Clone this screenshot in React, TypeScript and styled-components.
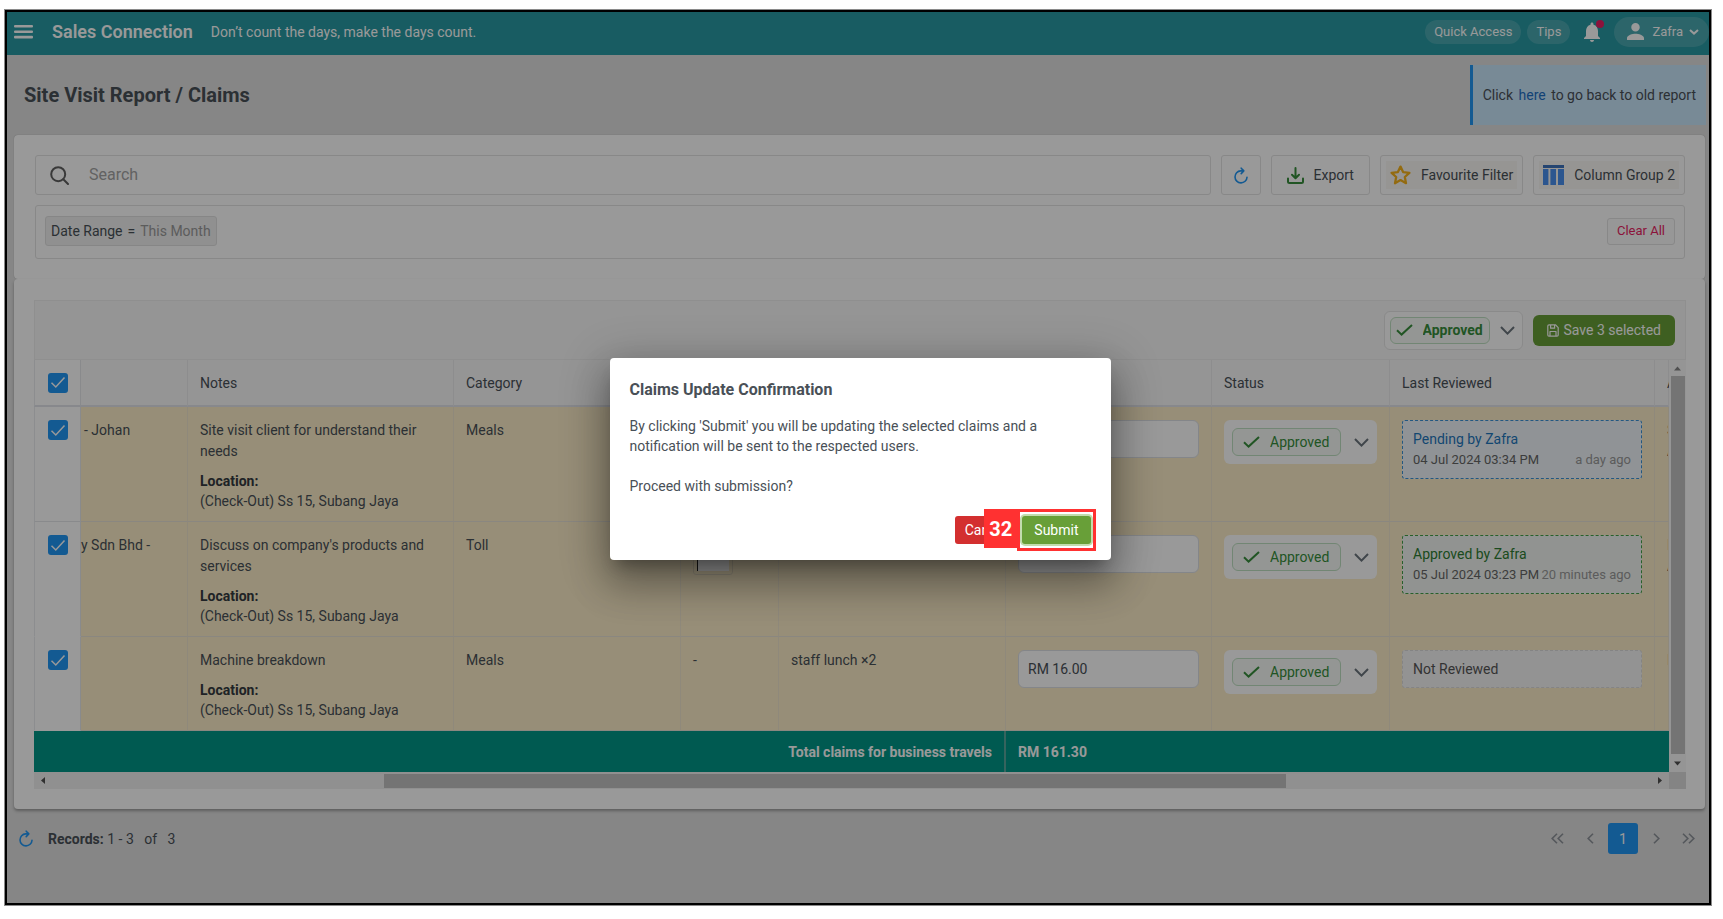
import React from "react";
import styled, { createGlobalStyle, css } from "styled-components";

const Global = createGlobalStyle`
  *, *::before, *::after { box-sizing: border-box; }
  body { margin: 0; background: #fff; font-family: Roboto, "Liberation Sans", sans-serif; font-size: 14px; line-height: 20px; color: #495057; }
  button, input, select { font: inherit; color: inherit; margin: 0; }
  button { cursor: pointer; }
  svg { display: block; flex: none; }
`;

const Page = styled.div`
  display: flex;
  min-height: 100vh;
  padding: 10px 12px 14px 5px;
`;

const Frame = styled.div`
  position: relative;
  display: flex;
  flex: 1;
  flex-direction: column;
  min-width: 0;
  overflow: hidden;
  border: 2px solid #000;
  outline: 1px solid #8a8a8a;
  background: #dfdfdf;
`;

/* ---------- top bar ---------- */

const TopBar = styled.header`
  display: flex;
  align-items: center;
  height: 43px;
  padding: 0 0 4px 7px;
  background: #2899a3;
  color: #fff;
`;

const MenuButton = styled.button`
  display: flex;
  padding: 0;
  border: 0;
  background: none;
`;

const Brand = styled.span`
  margin-left: 19px;
  font-size: 18px;
  font-weight: 600;
`;

const Motto = styled.span`
  flex: 1;
  margin-left: 18px;
`;

const TopActions = styled.nav`
  display: flex;
  align-items: center;
`;

const Pill = styled.button`
  height: 24px;
  margin-right: 6px;
  padding: 0 9px;
  border: 0;
  border-radius: 12px;
  background: rgba(255, 255, 255, 0.16);
  font-size: 13px;
  line-height: 16px;
`;

const BellButton = styled.button`
  position: relative;
  display: flex;
  margin: 0 14px 0 8px;
  padding: 0;
  border: 0;
  background: none;
`;

const AlertDot = styled.span`
  position: absolute;
  top: -2px;
  right: -4px;
  width: 8px;
  height: 8px;
  border-radius: 50%;
  background: #e91e63;
`;

const UserButton = styled.button`
  display: flex;
  align-items: center;
  height: 30px;
  padding: 0 10px 0 13px;
  border: 0;
  border-radius: 15px;
  background: rgba(255, 255, 255, 0.16);
  font-size: 13px;
`;

const UserName = styled.span`
  margin: 0 6px 0 8px;
`;

/* ---------- heading ---------- */

const Heading = styled.div`
  display: flex;
  align-items: center;
  justify-content: space-between;
  padding: 10px 3px 10px 17px;
`;

const Title = styled.h1`
  margin: 0;
  font-size: 20px;
  line-height: 24px;
  font-weight: 700;
`;

const Notice = styled.p`
  margin: 0;
  padding: 20px 10px;
  border-left: 3px solid #2196f3;
  background: #c9e6fb;
  font-size: 14px;
`;

const NoticeLink = styled.a`
  margin: 0 2px;
  color: #1d6fc4;
  text-decoration: none;
`;

/* ---------- cards ---------- */

const Card = styled.section`
  margin: 0 4px 0 7px;
  border-radius: 4px;
  background: #fff;
  box-shadow: 0 2px 3px rgba(0, 0, 0, 0.3);
`;

const FilterCard = styled(Card)`
  padding: 20px 20px 20px 21px;
  box-shadow: 0 0 1px rgba(0, 0, 0, 0.3);
`;

const SearchRow = styled.div`
  display: flex;
  gap: 10px;
  margin-bottom: 10px;
`;

const outlined = css`
  border: 1px solid #e3e3e3;
  border-radius: 3px;
  background: #fff;
`;

const SearchBox = styled.label`
  ${outlined}
  display: flex;
  flex: 1;
  align-items: center;
  gap: 20px;
  height: 40px;
  padding: 0 14px;
`;

const SearchInput = styled.input`
  flex: 1;
  min-width: 0;
  padding: 0;
  border: 0;
  outline: 0;
  background: none;
  font-size: 16px;
  &::placeholder { color: #a4a4a4; opacity: 1; }
`;

const ToolButton = styled.button<{ $tint?: boolean }>`
  ${outlined}
  display: flex;
  align-items: center;
  gap: 10px;
  height: 40px;
  padding: 0 ${(p) => (p.$tint ? 9 : 15)}px;
  ${(p) => p.$tint && css`box-shadow: inset 0 0 0 5px #fff; background: #fbf9f5;`}
`;

const RefreshButton = styled(ToolButton)`
  justify-content: center;
  width: 40px;
  padding: 0;
`;

const FilterRow = styled.div`
  ${outlined}
  display: flex;
  align-items: center;
  justify-content: space-between;
  height: 54px;
  padding: 0 9px 2px;
`;

const Chip = styled.span`
  display: flex;
  align-items: center;
  gap: 5px;
  height: 30px;
  padding: 0 5px;
  border: 1px solid #e0e0e0;
  border-radius: 3px;
  background: #f0f0f0;
`;

const ChipValue = styled.span`
  color: #9a9a9a;
`;

const ClearButton = styled.button`
  ${outlined}
  height: 27px;
  padding: 0 9px;
  background: #fcfcfc;
  color: #e91e63;
  font-size: 13px;
`;

const TableCard = styled(Card)`
  padding: 21px 19px 20px 20px;
`;

const TableToolbar = styled.div`
  display: flex;
  align-items: center;
  justify-content: flex-end;
  gap: 10px;
  height: 60px;
  padding: 0 10px;
  border: 1px solid #efefef;
  background: #f8f8f8;
`;

const SaveButton = styled.button`
  display: flex;
  align-items: center;
  justify-content: center;
  gap: 5px;
  height: 31px;
  padding: 0 14px;
  border: 0;
  border-radius: 6px;
  background: #689f38;
  color: #fff;
`;

/* ---------- table ---------- */

const TableArea = styled.div`
  display: grid;
  grid-template-columns: minmax(0, 1fr) 17px;
  grid-template-rows: auto 17px;
`;

const TableClip = styled.div`
  overflow: hidden;
`;

const Table = styled.table`
  width: 100%;
  table-layout: fixed;
  border-collapse: separate;
  border-spacing: 0;
`;

const Col = styled.col<{ $w?: number }>`
  ${(p) => p.$w && `width: ${p.$w}px;`}
`;

const HeadCell = styled.th`
  height: 47px;
  padding: 0 12px;
  border-right: 1px solid #ebebed;
  border-bottom: 2px solid #e1e3e9;
  background: #f8f8f9;
  font-weight: 400;
  text-align: left;
  white-space: nowrap;
`;

const Cell = styled.td`
  padding: 13px 12px 10px;
  border-right: 1px solid #efe5cd;
  border-bottom: 1px solid #e6e1d5;
  background: #fcedc8;
  line-height: 21px;
  vertical-align: top;
  white-space: nowrap;
`;

const checkFace = css`
  background: #fff;
  border-right: 1px solid #e4e6ea;
  border-left: 1px solid #e9ecef;
`;

const CheckHead = styled(HeadCell)`
  ${checkFace}
`;

const CheckCell = styled(Cell)<{ $last?: boolean }>`
  ${checkFace}
  border-bottom-color: ${(p) => (p.$last ? "#fff" : "#e4e6ea")};
`;

const Description = styled.div`
  white-space: normal;
`;

const Location = styled.div`
  margin-top: 9px;
  line-height: 20px;
  strong { display: block; color: #343a40; }
`;

const Overflowing = styled(Cell)`
  overflow: hidden;
`;

const Client = styled(Cell)`
  padding-left: 0;
  padding-right: 0;
`;

const ClientText = styled.span<{ $indent?: boolean }>`
  padding-left: ${(p) => (p.$indent ? 3 : 0)}px;
`;

const FootLabel = styled.td`
  height: 41px;
  padding: 0 12px;
  border-right: 2px solid #5aa79d;
  background: #009688;
  color: #fff;
  font-weight: 700;
  text-align: right;
`;

const FootValue = styled(FootLabel)`
  border-right: 0;
  text-align: left;
`;

const CheckBoxWrap = styled.label`
  display: grid;
  width: 20px;
  height: 20px;
  margin-left: 1px;
  > * { grid-area: 1 / 1; place-self: center; }
  svg { pointer-events: none; }
`;

const CheckInput = styled.input`
  width: 20px;
  height: 20px;
  appearance: none;
  border-radius: 3px;
  background: #2196f3;
`;

const AmountInput = styled.input`
  display: block;
  width: 100%;
  height: 38px;
  padding: 0 9px;
  border: 1px solid #dcdfe4;
  border-radius: 6px;
  background: #fff;
`;

const Receipt = styled.div`
  width: 40px;
  height: 40px;
  padding: 3px;
  border: 1px solid #e2d8bd;
  border-radius: 3px;
`;

const ReceiptPage = styled.div`
  height: 100%;
  border-left: 1px solid #222;
  background: #fff;
`;

const StatusBox = styled.div<{ $compact?: boolean }>`
  display: flex;
  align-items: center;
  justify-content: space-between;
  height: ${(p) => (p.$compact ? 39 : 44)}px;
  width: ${(p) => (p.$compact ? "139px" : "auto")};
  padding: ${(p) => (p.$compact ? "0 7px 0 5px" : "0 8px")};
  border: ${(p) => (p.$compact ? "1px solid #e6e6e6" : "0")};
  border-radius: 6px;
  background: #fff;
  color: #6c757d;
`;

const StatusTag = styled.span<{ $compact?: boolean }>`
  display: flex;
  align-items: center;
  gap: 10px;
  height: ${(p) => (p.$compact ? 27 : 28)}px;
  padding: ${(p) => (p.$compact ? "0 5px" : "0 10px")};
  border: 1px solid #bfe0c1;
  border-radius: 6px;
  background: #f7fbf7;
  color: #388e3c;
`;

const StatusSelect = styled.select<{ $compact?: boolean }>`
  padding: 0;
  border: 0;
  outline: 0;
  appearance: none;
  background: none;
  font-weight: ${(p) => (p.$compact ? 700 : 400)};
  line-height: 20px;
`;

const reviewTones = {
  pending: { line: "#3b93d8", bg: "#f0f6fb", text: "#1f77bd" },
  approved: { line: "#43a047", bg: "#f2f6f2", text: "#2e7d32" },
  none: { line: "#dcdcdc", bg: "#f5f5f5", text: "#555" },
};

const ReviewBox = styled.div<{ $tone: keyof typeof reviewTones }>`
  padding: 8px 10px;
  border: 1px dashed ${(p) => reviewTones[p.$tone].line};
  border-radius: 3px;
  background: ${(p) => reviewTones[p.$tone].bg};
  line-height: 20px;
`;

const ReviewTitle = styled.div<{ $tone: keyof typeof reviewTones }>`
  color: ${(p) => reviewTones[p.$tone].text};
`;

const ReviewMeta = styled.div`
  display: flex;
  justify-content: space-between;
  margin-top: 1px;
  font-size: 13px;
  color: #666;
`;

const Ago = styled.span`
  color: #999;
`;

const VScroll = styled.div`
  display: flex;
  flex-direction: column;
  align-items: center;
  justify-content: space-between;
  padding: 6px 1px;
  background: #f8f8f8;
`;

const VThumb = styled.div`
  flex: 1;
  width: 14px;
  margin: 5px 0 7px;
  background: #c1c1c1;
`;

const HScroll = styled.div`
  display: flex;
  align-items: center;
  padding: 0 6px;
  background: #f1f1f1;
`;

const HTrack = styled.div`
  display: flex;
  flex: 1;
`;

const HThumb = styled.div`
  width: 56%;
  height: 14px;
  margin-left: 21%;
  background: #c1c1c1;
`;

const ScrollCorner = styled.div`
  background: #dcdcdc;
`;

/* ---------- pager ---------- */

const Pager = styled.footer`
  display: flex;
  align-items: center;
  justify-content: space-between;
  padding: 14px 6px 15px 11px;
`;

const Records = styled.div`
  display: flex;
  align-items: center;
`;

const RecordsText = styled.span`
  margin-left: 14px;
  white-space: pre;
`;

const Pages = styled.nav`
  display: flex;
  align-items: center;
  gap: 14px;
`;

const PageButton = styled.button<{ $current?: boolean }>`
  display: flex;
  align-items: center;
  justify-content: center;
  min-width: ${(p) => (p.$current ? 30 : 8)}px;
  height: 31px;
  padding: 0;
  border: 0;
  border-radius: 3px;
  background: ${(p) => (p.$current ? "#2196f3" : "none")};
  color: ${(p) => (p.$current ? "#fff" : "#8d9299")};
`;

const PageEdge = styled(PageButton)`
  margin: 0 8px;
`;

/* ---------- dialog ---------- */

const Mask = styled.div`
  position: absolute;
  inset: 0;
  display: flex;
  align-items: center;
  justify-content: center;
  padding: 2px 0 0 4px;
  background: rgba(0, 0, 0, 0.4);
`;

const Dialog = styled.section`
  width: 501px;
  padding: 20px 20px 16px;
  border-radius: 4px;
  background: #fff;
  box-shadow: 0 11px 15px -7px rgba(0, 0, 0, 0.3), 0 24px 38px 3px rgba(0, 0, 0, 0.24),
    0 9px 46px 8px rgba(0, 0, 0, 0.2);
`;

const DialogTitle = styled.h2`
  margin: 0 0 14px;
  font-size: 16px;
  line-height: 24px;
  font-weight: 700;
`;

const DialogText = styled.p`
  margin: 0 0 20px;
`;

const DialogActions = styled.div`
  display: flex;
  justify-content: flex-end;
  gap: 5px;
`;

const ActionButton = styled.button<{ $kind: "cancel" | "submit" }>`
  height: 28px;
  padding: 0 ${(p) => (p.$kind === "cancel" ? 10 : 12)}px;
  border: 0;
  border-radius: 3px;
  background: ${(p) => (p.$kind === "cancel" ? "#d32f2f" : "#689f38")};
  color: #fff;
  ${(p) => p.$kind === "submit" && "box-shadow: 0 0 0 2px #c3dcae;"}
`;

const SubmitStep = styled.div`
  position: relative;
`;

const StepOutline = styled.span`
  position: absolute;
  inset: -7px -5px;
  border: 3px solid #ff3131;
  pointer-events: none;
`;

const StepNumber = styled.span`
  position: absolute;
  top: -7px;
  right: calc(100% + 5px);
  width: 33px;
  height: 39px;
  background: #ff3131;
  color: #fff;
  font-size: 20px;
  line-height: 40px;
  font-weight: 700;
  text-align: center;
`;

/* ---------- icons ---------- */

const MenuIcon = () => (
  <svg width="19" height="14" viewBox="0 0 19 14" fill="#fff">
    <rect y="0" width="19" height="2.6" rx="1" />
    <rect y="5.4" width="19" height="2.6" rx="1" />
    <rect y="10.8" width="19" height="2.6" rx="1" />
  </svg>
);
const BellIcon = () => (
  <svg width="16" height="20" viewBox="4 2 16 20" fill="#fff" preserveAspectRatio="none">
    <path d="M12 22c1.1 0 2-.9 2-2h-4c0 1.1.9 2 2 2zm6-6v-5c0-3.07-1.63-5.64-4.5-6.32V4c0-.83-.67-1.5-1.5-1.5s-1.5.67-1.5 1.5v.68C7.64 5.36 6 7.92 6 11v5l-2 2v1h16v-1l-2-2z" />
  </svg>
);
const PersonIcon = () => (
  <svg width="17" height="17" viewBox="4 4 16 16" fill="#fff">
    <path d="M12 12c2.21 0 4-1.79 4-4s-1.79-4-4-4-4 1.79-4 4 1.79 4 4 4zm0 2c-2.67 0-8 1.34-8 4v2h16v-2c0-2.66-5.33-4-8-4z" />
  </svg>
);
const Chevron = ({ w = 14, h = 8, s = 2 }: { w?: number; h?: number; s?: number }) => (
  <svg width={w} height={h} viewBox={`0 0 ${w} ${h}`} fill="none" stroke="currentColor" strokeWidth={s}>
    <path d={`M1 1L${w / 2} ${h - 1.4}L${w - 1} 1`} />
  </svg>
);
const SearchIcon = () => (
  <svg width="19" height="19" viewBox="0 0 19 19" fill="none" stroke="#606060" strokeWidth="2" strokeLinecap="round">
    <circle cx="8.2" cy="8.2" r="7" />
    <path d="M13.3 13.3L18 18" />
  </svg>
);
const RefreshIcon = () => (
  <svg width="16" height="17" viewBox="0 0 16 17" fill="none" stroke="#2196f3" strokeWidth="1.6" strokeLinecap="round" strokeLinejoin="round">
    <path d="M10.4 3.9H7.7A6 6 0 1 0 14 10.2M8.2 1.2L10.8 3.9L8.2 6.6" />
  </svg>
);
const DownloadIcon = () => (
  <svg width="17" height="17" viewBox="0 0 17 17" fill="none" stroke="#388e3c" strokeWidth="2" strokeLinecap="round" strokeLinejoin="round">
    <path d="M8.5 1V11M5 7.7L8.5 11.2L12 7.7M1 11.5V14.5Q1 16 2.5 16H14.5Q16 16 16 14.5V11.5" />
  </svg>
);
const StarIcon = () => (
  <svg width="21" height="20" viewBox="0 0 21 20" fill="none" stroke="#f5b21c" strokeWidth="2.3" strokeLinejoin="round">
    <path d="M10.5 1.6L13.1 7.1L19.4 7.8L14.8 12L16 18.2L10.5 15.1L5 18.2L6.2 12L1.6 7.8L7.9 7.1Z" />
  </svg>
);
const ColumnsIcon = () => (
  <svg width="21" height="20" viewBox="0 0 21 20">
    <path fill="#3f74bd" d="M0 0H21V3H0Z" />
    <path fill="#4a8fee" d="M0 4H5.4V20H0ZM7.4 4H13V20H7.4ZM15 4H21V20H15Z" />
  </svg>
);
const CheckMark = () => (
  <svg width="17" height="12" viewBox="0 0 17 12" fill="none" stroke="currentColor" strokeWidth="2">
    <path d="M1 6.2L5.6 10.6L16 1" />
  </svg>
);
const SaveIcon = () => (
  <svg width="12" height="13" viewBox="0 0 12 13" fill="none" stroke="#fff" strokeWidth="1.2" strokeLinejoin="round">
    <path d="M.8 2Q.8 .8 2 .8H8.6L11.2 3.6V11Q11.2 12.2 10 12.2H2Q.8 12.2 .8 11ZM3 12V7.5H9V12M3.6 1V4.2H7.6V1" />
  </svg>
);
const Arrow = ({ dir, tone = "#505050" }: { dir: "up" | "down" | "left" | "right"; tone?: string }) => {
  const d = { up: "M0 5L3.5 1L7 5Z", down: "M0 1L3.5 5L7 1Z", left: "M5 0L1 3.5L5 7Z", right: "M1 0L5 3.5L1 7Z" }[dir];
  const flat = dir === "up" || dir === "down";
  return (
    <svg width={flat ? 7 : 6} height={flat ? 5 : 7} viewBox={flat ? "0 .5 7 5" : "0 0 6 7"} fill={tone}>
      <path d={d} />
    </svg>
  );
};
const Angles = ({ dir, double }: { dir: "left" | "right"; double?: boolean }) => (
  <svg width={double ? 13 : 7} height="11" viewBox={double ? "0 0 13 11" : "0 0 7 11"} fill="none" stroke="currentColor" strokeWidth="1.6">
    {dir === "left" ? <path d="M6 .8L1.2 5.5L6 10.2" /> : <path d="M1 .8L5.8 5.5L1 10.2" />}
    {double && (dir === "left" ? <path d="M12 .8L7.2 5.5L12 10.2" /> : <path d="M7 .8L11.8 5.5L7 10.2" />)}
  </svg>
);

/* ---------- parts ---------- */

const Check = ({ label }: { label: string }) => (
  <CheckBoxWrap>
    <CheckInput type="checkbox" defaultChecked aria-label={label} />
    <svg width="16" height="13" viewBox="0 0 16 13" fill="none" stroke="#fff" strokeWidth="1.5">
      <path d="M1.5 6.8L5.8 11L14.5 1.5" />
    </svg>
  </CheckBoxWrap>
);

const Status = ({ compact, label }: { compact?: boolean; label: string }) => (
  <StatusBox $compact={compact}>
    <StatusTag $compact={compact}>
      <CheckMark />
      <StatusSelect $compact={compact} aria-label={label} defaultValue="Approved">
        <option>Approved</option>
        <option>Pending</option>
        <option>Rejected</option>
      </StatusSelect>
    </StatusTag>
    <Chevron w={15} h={9} />
  </StatusBox>
);

type Claim = {
  client?: string;
  indent?: boolean;
  note: string;
  category: string;
  receipt: "image" | "none" | "hidden";
  detail: string;
  amount: string;
  review: { tone: keyof typeof reviewTones; title: string; date?: string; ago?: string };
  tail: string[];
};

const claims: Claim[] = [
  {
    client: "- Johan", indent: true, note: "Site visit client for understand their needs", category: "Meals",
    receipt: "hidden", detail: "", amount: "",
    review: { tone: "pending", title: "Pending by Zafra", date: "04 Jul 2024 03:34 PM", ago: "a day ago" }, tail: ["S", "A"],
  },
  {
    client: "y Sdn Bhd -", note: "Discuss on company's products and services", category: "Toll",
    receipt: "image", detail: "", amount: "",
    review: { tone: "approved", title: "Approved by Zafra", date: "05 Jul 2024 03:23 PM", ago: "20 minutes ago" }, tail: ["D", "A"],
  },
  {
    note: "Machine breakdown", category: "Meals", receipt: "none", detail: "staff lunch ×2", amount: "RM 16.00",
    review: { tone: "none", title: "Not Reviewed" }, tail: ["D"],
  },
];

const ClaimRow = ({ claim, last }: { claim: Claim; last: boolean }) => (
  <tr>
    <CheckCell $last={last}><Check label={`Select ${claim.note}`} /></CheckCell>
    <Client><ClientText $indent={claim.indent}>{claim.client}</ClientText></Client>
    <Cell>
      <Description>{claim.note}</Description>
      <Location><strong>Location:</strong>(Check-Out) Ss 15, Subang Jaya</Location>
    </Cell>
    <Cell>{claim.category}</Cell>
    <Cell>
      {claim.receipt === "image" && <Receipt><ReceiptPage /></Receipt>}
      {claim.receipt === "none" && "-"}
    </Cell>
    <Cell>{claim.detail}</Cell>
    <Cell><AmountInput aria-label="Amount" defaultValue={claim.amount} /></Cell>
    <Cell><Status label="Claim status" /></Cell>
    <Cell>
      <ReviewBox $tone={claim.review.tone}>
        <ReviewTitle $tone={claim.review.tone}>{claim.review.title}</ReviewTitle>
        {claim.review.date && <ReviewMeta><span>{claim.review.date}</span><Ago>{claim.review.ago}</Ago></ReviewMeta>}
      </ReviewBox>
    </Cell>
    <Overflowing>{claim.tail.map((t, i) => <div key={i}>{t}</div>)}</Overflowing>
  </tr>
);

export default function App() {
  return (
    <Page>
      <Global />
      <Frame>
        <TopBar>
          <MenuButton aria-label="Menu"><MenuIcon /></MenuButton>
          <Brand>Sales Connection</Brand>
          <Motto>Don’t count the days, make the days count.</Motto>
          <TopActions>
            <Pill>Quick Access</Pill>
            <Pill>Tips</Pill>
            <BellButton aria-label="Notifications"><BellIcon /><AlertDot /></BellButton>
            <UserButton><PersonIcon /><UserName>Zafra</UserName><Chevron w={10} h={6} /></UserButton>
          </TopActions>
        </TopBar>

        <Heading>
          <Title>Site Visit Report / Claims</Title>
          <Notice>Click <NoticeLink href="#old">here</NoticeLink> to go back to old report</Notice>
        </Heading>

        <FilterCard>
          <SearchRow>
            <SearchBox><SearchIcon /><SearchInput type="text" placeholder="Search" aria-label="Search" /></SearchBox>
            <RefreshButton aria-label="Refresh"><RefreshIcon /></RefreshButton>
            <ToolButton><DownloadIcon />Export</ToolButton>
            <ToolButton $tint><StarIcon />Favourite Filter</ToolButton>
            <ToolButton $tint><ColumnsIcon />Column Group 2</ToolButton>
          </SearchRow>
          <FilterRow>
            <Chip><span>Date Range</span><span>=</span><ChipValue>This Month</ChipValue></Chip>
            <ClearButton>Clear All</ClearButton>
          </FilterRow>
        </FilterCard>

        <TableCard>
          <TableToolbar>
            <Status compact label="Status for selected claims" />
            <SaveButton><SaveIcon />Save 3 selected</SaveButton>
          </TableToolbar>
          <TableArea>
            <TableClip>
              <Table>
                <colgroup>
                  <Col $w={47} /><Col $w={107} /><Col $w={266} /><Col $w={227} /><Col $w={98} />
                  <Col /><Col $w={206} /><Col $w={178} /><Col $w={265} /><Col $w={14} />
                </colgroup>
                <thead>
                  <tr>
                    <CheckHead><Check label="Select all claims" /></CheckHead>
                    <HeadCell /><HeadCell>Notes</HeadCell><HeadCell>Category</HeadCell><HeadCell /><HeadCell />
                    <HeadCell /><HeadCell>Status</HeadCell><HeadCell>Last Reviewed</HeadCell><HeadCell>A</HeadCell>
                  </tr>
                </thead>
                <tbody>
                  {claims.map((c, i) => <ClaimRow key={c.note} claim={c} last={i > 0} />)}
                </tbody>
                <tfoot>
                  <tr>
                    <FootLabel colSpan={6}>Total claims for business travels</FootLabel>
                    <FootValue colSpan={4}>RM 161.30</FootValue>
                  </tr>
                </tfoot>
              </Table>
            </TableClip>
            <VScroll><Arrow dir="up" tone="#868686" /><VThumb /><Arrow dir="down" /></VScroll>
            <HScroll><Arrow dir="left" /><HTrack><HThumb /></HTrack><Arrow dir="right" /></HScroll>
            <ScrollCorner />
          </TableArea>
        </TableCard>

        <Pager>
          <Records>
            <RefreshIcon />
            <RecordsText><strong>Records:</strong>{" 1 - 3   of   3"}</RecordsText>
          </Records>
          <Pages aria-label="Pages">
            <PageEdge aria-label="First page"><Angles dir="left" double /></PageEdge>
            <PageButton aria-label="Previous page"><Angles dir="left" /></PageButton>
            <PageButton $current>1</PageButton>
            <PageButton aria-label="Next page"><Angles dir="right" /></PageButton>
            <PageEdge aria-label="Last page"><Angles dir="right" double /></PageEdge>
          </Pages>
        </Pager>

        <Mask>
          <Dialog role="dialog" aria-modal="true" aria-labelledby="confirm-title">
            <DialogTitle id="confirm-title">Claims Update Confirmation</DialogTitle>
            <DialogText>By clicking 'Submit' you will be updating the selected claims and a notification will be sent to the respected users.</DialogText>
            <DialogText>Proceed with submission?</DialogText>
            <DialogActions>
              <ActionButton $kind="cancel">Cancel</ActionButton>
              <SubmitStep>
                <ActionButton $kind="submit">Submit</ActionButton>
                <StepOutline />
                <StepNumber>32</StepNumber>
              </SubmitStep>
            </DialogActions>
          </Dialog>
        </Mask>
      </Frame>
    </Page>
  );
}
